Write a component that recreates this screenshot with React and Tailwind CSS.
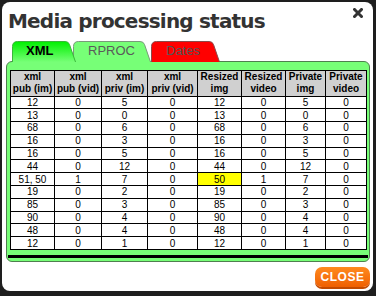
const headers = [
  ["xml", "pub (im)"],
  ["xml", "pub (vid)"],
  ["xml", "priv (im)"],
  ["xml", "priv (vid)"],
  ["Resized", "img"],
  ["Resized", "video"],
  ["Private", "img"],
  ["Private", "video"],
];

const rows = [
  ["12", "0", "5", "0", "12", "0", "5", "0"],
  ["13", "0", "0", "0", "13", "0", "0", "0"],
  ["68", "0", "6", "0", "68", "0", "6", "0"],
  ["16", "0", "3", "0", "16", "0", "3", "0"],
  ["16", "0", "5", "0", "16", "0", "5", "0"],
  ["44", "0", "12", "0", "44", "0", "12", "0"],
  ["51, 50", "1", "7", "0", "50", "1", "7", "0"],
  ["19", "0", "2", "0", "19", "0", "2", "0"],
  ["85", "0", "3", "0", "85", "0", "3", "0"],
  ["90", "0", "4", "0", "90", "0", "4", "0"],
  ["48", "0", "4", "0", "48", "0", "4", "0"],
  ["12", "0", "1", "0", "12", "0", "1", "0"],
];

const colWidths = [44, 47, 46, 50, 44, 44, 40, 41];

function TabShape({ w, fill, stroke, gradient }) {
  const h = 21;
  const d = `M0.5,${h} L0.5,5.5 Q0.5,0.5 5.5,0.5 L${w - 11},0.5 Q${w - 7.5},0.5 ${w - 6.5},3.5 L${w - 0.5},${h}`;
  return (
    <svg
      width={w}
      height={h}
      viewBox={`0 0 ${w} ${h}`}
      className="absolute left-0 top-0"
      aria-hidden="true"
    >
      {gradient && (
        <defs>
          <linearGradient id="xmlgrad" x1="0" y1="0" x2="0" y2="1">
            <stop offset="0" stopColor="#00f000" />
            <stop offset="1" stopColor="#77ff77" />
          </linearGradient>
        </defs>
      )}
      <path d={d + " Z"} fill={gradient ? "url(#xmlgrad)" : fill} />
      <path d={d} fill="none" stroke={stroke} strokeWidth="1" />
    </svg>
  );
}

export default function App() {
  return (
    <div className="w-[376px] h-[296px] bg-[#1e1e1e] pt-[2px] pl-[2px] overflow-hidden">
      <div className="w-[371px] h-[289px] bg-white rounded-[8px] pl-[4px] pr-[3px] flex flex-col">
        <div className="flex items-start justify-between h-[38px]">
          <h1 className="pt-[7px] pl-[2px] text-[20px] leading-[24px] font-bold text-[#333] [font-family:'DejaVu_Sans',sans-serif] tracking-[-0.8px]">
            Media processing status
          </h1>
          <svg width="10" height="10" viewBox="0 0 10 10" className="mt-[6px] mr-[7px]" aria-hidden="true">
            <path d="M1.5,1.5 L8.5,8.5 M8.5,1.5 L1.5,8.5" stroke="#333" strokeWidth="3" strokeLinecap="square" />
          </svg>
        </div>

        <div className="flex h-[21px] pl-[6px] mt-[0.5px] [font-family:'Liberation_Sans',Arial,sans-serif] text-[13px]">
          <div className="relative z-20 w-[64px] h-[21px]">
            <TabShape w={64} gradient stroke="#3bb53b" />
            <span className="relative block pl-[14px] pt-[2px] leading-[16px] font-bold text-black">XML</span>
          </div>
          <div className="relative z-10 -ml-[3px] w-[78px] h-[21px]">
            <TabShape w={78} fill="#77ff77" stroke="#7a9a7a" />
            <span className="relative block pl-[15px] pt-[2px] leading-[16px] text-[#5a5a5a]">RPROC</span>
          </div>
          <div className="relative z-10 w-[69px] h-[21px]">
            <TabShape w={69} fill="#ff0000" stroke="#8a4a4a" />
            <span className="relative block pl-[15px] pt-[2px] leading-[16px] text-[#555]">Dates</span>
          </div>
        </div>

        <div className="relative z-0 -mt-[1px] w-[364px] bg-[#77ff77] border border-[#4f7f4f] rounded-[6px] pt-[8px] pb-[3px] px-[1px]">
          <div className="border-b-[3px] border-black pb-[5px] pl-[2px]">
            <table className="table-fixed border-collapse w-[356px] [font-family:'Liberation_Sans',Arial,sans-serif] text-black">
              <colgroup>
                {colWidths.map((w, i) => (
                  <col key={i} style={{ width: w }} />
                ))}
              </colgroup>
              <thead>
                <tr className="h-[26px]">
                  {headers.map((h, i) => (
                    <th
                      key={i}
                      className="border border-black bg-[#d0d0d0] p-0 text-[10px] leading-[12px] font-bold text-center align-middle whitespace-nowrap"
                    >
                      {h[0]}
                      <br />
                      {h[1]}
                    </th>
                  ))}
                </tr>
              </thead>
              <tbody className="bg-white">
                {rows.map((r, ri) => (
                  <tr key={ri} className="h-[12.8px]">
                    {r.map((c, ci) => (
                      <td
                        key={ci}
                        className={
                          "border border-black p-0 text-[10px] leading-[11px] text-center align-middle whitespace-nowrap " +
                          (ri === 6 && ci === 4 ? "bg-[#ffff00]" : "")
                        }
                      >
                        {c}
                      </td>
                    ))}
                  </tr>
                ))}
              </tbody>
            </table>
          </div>
        </div>

        <div className="flex justify-end mt-[5px]">
          <button className="w-[55px] h-[20px] rounded-[7px] bg-gradient-to-b from-[#ff8a1e] to-[#ef5f00] shadow-[0_2px_0_#c24a00] text-white text-[12px] font-bold tracking-[0.5px] leading-[20px] [font-family:'Liberation_Sans',Arial,sans-serif]">
            CLOSE
          </button>
        </div>
      </div>
    </div>
  );
}
